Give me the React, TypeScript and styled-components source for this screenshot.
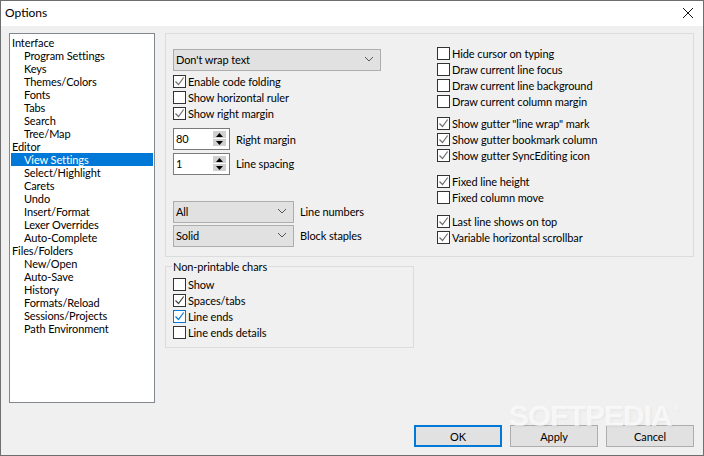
import React from "react";
import styled, { createGlobalStyle } from "styled-components";

const Global = createGlobalStyle`
  html, body { margin: 0; padding: 0; background: #f0f0f0; }
  body { font-family: Lato, "Open Sans", sans-serif; font-size: 11px; letter-spacing: -0.1px; color: #000; }
`;

const Win = styled.div`
  position: relative; box-sizing: border-box; width: 704px; height: 456px;
  border: 1px solid #6e6e6e; background: #f0f0f0; display: flex; flex-direction: column; overflow: hidden;
`;
const TitleBar = styled.div`
  height: 25px; background: #fff; display: flex; align-items: center; justify-content: space-between;
  padding: 0 9px 2px 4px; font-size: 12px; letter-spacing: 0; flex: none; box-sizing: border-box;
`;
const Body = styled.div`
  flex: 1; display: flex; gap: 10px; padding: 7px 9px 0 8px; min-height: 0;
`;
const Tree = styled.div`
  box-sizing: border-box; width: 146px; height: 370px; border: 1px solid #82878f; background: #fff;
  padding: 2px 1px; flex: none;
`;
const TreeItem = styled.div<{ $child?: boolean; $sel?: boolean }>`
  height: 13px; line-height: 13px; white-space: nowrap; padding-left: ${(p) => (p.$child ? 13 : 1)}px;
  background: ${(p) => (p.$sel ? "#0078d7" : "transparent")}; color: ${(p) => (p.$sel ? "#fff" : "#000")};
`;
const Right = styled.div`
  flex: 1; display: flex; flex-direction: column; gap: 9px;
`;
const Panel = styled.div`
  box-sizing: border-box; height: 224px; border: 1px solid #dcdcdc; display: flex; padding: 12px 7px 0;
`;
const ColA = styled.div`
  width: 264px; flex: none; padding-top: 3px;
`;
const ColB = styled.div`
  display: flex; flex-direction: column;
`;
const Group = styled.div<{ $gap?: number }>`
  margin-top: ${(p) => p.$gap ?? 0}px;
`;
const Combo = styled.div<{ $w: number }>`
  box-sizing: border-box; width: ${(p) => p.$w}px; height: 22px; border: 1px solid #adadad; background: #e1e1e1;
  display: flex; align-items: center; justify-content: space-between; padding: 0 6px 2px 2px;
`;
const Row = styled.div`
  box-sizing: border-box; height: 16px; display: flex; align-items: center; gap: 2px; white-space: nowrap; padding-bottom: 1px;
`;
const Box = styled.span<{ $tone: "plain" | "gray" | "blue" }>`
  box-sizing: border-box; width: 13px; height: 13px; flex: none; display: flex; align-items: center; justify-content: center;
  border: 1px solid ${(p) => (p.$tone === "blue" ? "#0078d7" : "#333")}; background: #fff;
`;
const SpinRow = styled.div<{ $gap: number }>`
  display: flex; align-items: center; gap: 6px; margin-top: ${(p) => p.$gap}px;
`;
const SpinBox = styled.div`
  box-sizing: border-box; width: 57px; height: 22px; border: 1px solid #7a7a7a; background: #fff;
  display: flex; align-items: center; justify-content: space-between; padding: 0 3px 1px 2px;
`;
const SpinBtns = styled.div`
  display: flex; flex-direction: column; gap: 1px;
`;
const SpinBtn = styled.div`
  width: 13px; height: 7px; background: #d0d0d0; border: 0; display: flex; align-items: center; justify-content: center;
`;
const ComboRow = styled.div<{ $gap: number }>`
  display: flex; align-items: center; gap: 6px; margin-top: ${(p) => p.$gap}px;
`;
const FieldLabel = styled.span<{ $lift?: boolean }>`
  padding-bottom: ${(p) => (p.$lift ? 2 : 0)}px;
`;
const CheckList = styled.div<{ $gap: number }>`
  margin-top: ${(p) => p.$gap}px;
`;
const Fieldset = styled.div`
  position: relative; box-sizing: border-box; width: 249px; height: 82px; border: 1px solid #dcdcdc;
  padding: 10px 7px 0;
`;
const Legend = styled.span`
  position: absolute; left: 6px; top: -7px; background: #f0f0f0; padding: 0 1px; line-height: 13px;
`;
const Footer = styled.div`
  display: flex; justify-content: flex-end; gap: 8px; padding: 0 9px 8px 0; flex: none;
`;
const Btn = styled.div<{ $def?: boolean }>`
  box-sizing: border-box; width: 88px; height: 22px; display: flex; align-items: center; justify-content: center;
  background: #e1e1e1; border: ${(p) => (p.$def ? "2px solid #0078d7" : "1px solid #adadad")};
`;
const Mark = styled.span`
  position: absolute; left: 508px; top: 404px; font-size: 30px; font-weight: 700; letter-spacing: -1px;
  color: rgba(255,255,255,0.7); text-shadow: 1px 1px 2px rgba(0,0,0,0.05);
  font-family: "Liberation Sans", sans-serif; line-height: 21px; display: flex; align-items: flex-start;
`;
const Reg = styled.span`
  font-size: 8px; line-height: 8px; font-weight: 400; letter-spacing: 0; margin-left: 2px;
`;

const Chevron = () => (
  <svg width="10" height="6" viewBox="0 0 10 6"><path d="M1 1l4 4 4-4" fill="none" stroke="#555" strokeWidth="1" /></svg>
);
const tickColor = { plain: "#707070", gray: "#444", blue: "#0078d7" };
const Tick = ({ color }: { color: string }) => (
  <svg width="11" height="11" viewBox="0 0 11 11"><path d="M1.5 5.5l3 3 5.2-7" fill="none" stroke={color} strokeWidth="1.2" /></svg>
);
const Check = ({ on, tone = "plain", children }: { on?: boolean; tone?: "plain" | "gray" | "blue"; children: string }) => (
  <Row>
    <Box $tone={tone}>{on && <Tick color={tickColor[tone]} />}</Box>
    {children}
  </Row>
);
const Spin = ({ value }: { value: string }) => (
  <SpinBox>
    {value}
    <SpinBtns>
      <SpinBtn><svg width="7" height="4" viewBox="0 0 7 4"><path d="M3.5 0L7 4H0z" fill="#000" /></svg></SpinBtn>
      <SpinBtn><svg width="7" height="4" viewBox="0 0 7 4"><path d="M0 0h7L3.5 4z" fill="#000" /></svg></SpinBtn>
    </SpinBtns>
  </SpinBox>
);

const tree: [string, boolean?, boolean?][] = [
  ["Interface"], ["Program Settings", true], ["Keys", true], ["Themes/Colors", true], ["Fonts", true], ["Tabs", true],
  ["Search", true], ["Tree/Map", true], ["Editor"], ["View Settings", true, true], ["Select/Highlight", true], ["Carets", true],
  ["Undo", true], ["Insert/Format", true], ["Lexer Overrides", true], ["Auto-Complete", true], ["Files/Folders"],
  ["New/Open", true], ["Auto-Save", true], ["History", true], ["Formats/Reload", true], ["Sessions/Projects", true], ["Path Environment", true],
];

export default function App() {
  return (
    <Win>
      <Global />
      <TitleBar>
        Options
        <svg width="12" height="12" viewBox="0 0 12 12"><path d="M1 1l10 10M11 1L1 11" stroke="#111" strokeWidth="1" fill="none" /></svg>
      </TitleBar>
      <Body>
        <Tree>
          {tree.map(([t, c, s]) => <TreeItem key={t} $child={c} $sel={s}>{t}</TreeItem>)}
        </Tree>
        <Right>
          <Panel>
            <ColA>
              <Combo $w={208}>Don't wrap text<Chevron /></Combo>
              <CheckList $gap={3}>
                <Check on>Enable code folding</Check>
                <Check>Show horizontal ruler</Check>
                <Check on>Show right margin</Check>
              </CheckList>
              <SpinRow $gap={6}><Spin value="80" /><FieldLabel>Right margin</FieldLabel></SpinRow>
              <SpinRow $gap={3}><Spin value="1" /><FieldLabel $lift>Line spacing</FieldLabel></SpinRow>
              <ComboRow $gap={26}><Combo $w={121}>All<Chevron /></Combo><FieldLabel $lift>Line numbers</FieldLabel></ComboRow>
              <ComboRow $gap={2}><Combo $w={121}>Solid<Chevron /></Combo><FieldLabel $lift>Block staples</FieldLabel></ComboRow>
            </ColA>
            <ColB>
              <Group>
                <Check>Hide cursor on typing</Check>
                <Check>Draw current line focus</Check>
                <Check>Draw current line background</Check>
                <Check>Draw current column margin</Check>
              </Group>
              <Group $gap={6}>
                <Check on>Show gutter "line wrap" mark</Check>
                <Check on>Show gutter bookmark column</Check>
                <Check on>Show gutter SyncEditing icon</Check>
              </Group>
              <Group $gap={10}>
                <Check on>Fixed line height</Check>
                <Check>Fixed column move</Check>
              </Group>
              <Group $gap={8}>
                <Check on>Last line shows on top</Check>
                <Check on>Variable horizontal scrollbar</Check>
              </Group>
            </ColB>
          </Panel>
          <Fieldset>
            <Legend>Non-printable chars</Legend>
            <Check>Show</Check>
            <Check on tone="gray">Spaces/tabs</Check>
            <Check on tone="blue">Line ends</Check>
            <Check>Line ends details</Check>
          </Fieldset>
        </Right>
      </Body>
      <Footer>
        <Btn $def>OK</Btn>
        <Btn>Apply</Btn>
        <Btn>Cancel</Btn>
      </Footer>
      <Mark>SOFTPEDIA<Reg>®</Reg></Mark>
    </Win>
  );
}
